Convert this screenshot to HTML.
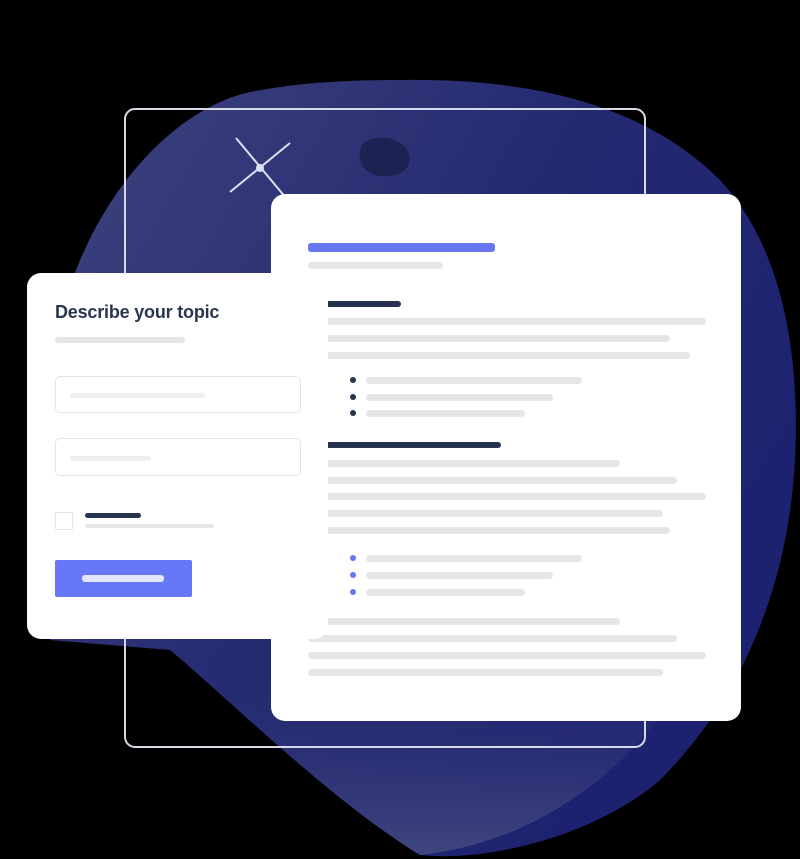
<!DOCTYPE html><html><head><style>
body{margin:0;background:#000;width:800px;height:859px;overflow:hidden;position:relative;font-family:"Liberation Sans",sans-serif}
.a{position:absolute}
.g{position:absolute;background:#e5e6e8;border-radius:4px;height:7px}
.d{position:absolute;background:#26344f;border-radius:3px;height:6px}
.b{position:absolute;width:6px;height:6px;border-radius:50%;background:#26344f}
.bb{background:#6677f0}
</style></head><body>
<svg class="a" style="left:0;top:0" width="800" height="859">
<defs><linearGradient id="gr" x1="0" y1="0" x2="1" y2="0.6"><stop offset="0" stop-color="#3e437f"/><stop offset=".55" stop-color="#242a70"/><stop offset="1" stop-color="#1c2170"/></linearGradient>
<linearGradient id="gb" x1="0" y1="0" x2="0" y2="1"><stop offset="0" stop-color="#262c72" stop-opacity="0"/><stop offset="1" stop-color="#40467f"/></linearGradient></defs>
<path d="M400 80 C520 78 640 100 720 180 C785 250 800 360 795 460 C788 590 740 700 660 780 C590 840 480 862 420 855 C330 800 230 700 170 650 L50 640 C42 540 44 400 60 320 C90 200 170 110 250 92 C300 82 350 80 400 80Z" fill="url(#gr)"/>
<path d="M170 650 L700 650 C660 740 560 840 420 855 C330 800 230 700 170 650Z" fill="url(#gb)"/>
<rect x="125" y="109" width="520" height="638" rx="10" fill="none" stroke="#d8d9e6" stroke-width="2"/>
<path d="M236 138 L286 198 M230 192 L290 143" stroke="#dfe0ef" stroke-width="2"/>
<circle cx="260" cy="168" r="4" fill="#dfe0ef"/>
<path d="M368 140 C385 134 406 140 409 155 C412 170 398 178 380 176 C362 173 358 160 360 150 C361 145 364 142 368 140Z" fill="#1d2252"/>
</svg>
<div class="a" style="left:271px;top:194px;width:470px;height:527px;background:#fff;border-radius:14px"></div>
<div class="a" style="left:308px;top:243px;width:187px;height:9px;background:#6677f0;border-radius:3px"></div>
<div class="g" style="left:308px;top:262px;width:135px"></div>
<div class="d" style="left:308px;top:301px;width:93px"></div>
<div class="g" style="left:308px;top:318px;width:398px"></div>
<div class="g" style="left:308px;top:335px;width:362px"></div>
<div class="g" style="left:308px;top:352px;width:382px"></div>
<div class="b" style="left:350px;top:377px"></div><div class="g" style="left:366px;top:377px;width:216px"></div>
<div class="b" style="left:350px;top:394px"></div><div class="g" style="left:366px;top:394px;width:187px"></div>
<div class="b" style="left:350px;top:410px"></div><div class="g" style="left:366px;top:410px;width:159px"></div>
<div class="d" style="left:308px;top:442px;width:193px"></div>
<div class="g" style="left:308px;top:460px;width:312px"></div>
<div class="g" style="left:308px;top:477px;width:369px"></div>
<div class="g" style="left:308px;top:493px;width:398px"></div>
<div class="g" style="left:308px;top:510px;width:355px"></div>
<div class="g" style="left:308px;top:527px;width:362px"></div>
<div class="b bb" style="left:350px;top:555px"></div><div class="g" style="left:366px;top:555px;width:216px"></div>
<div class="b bb" style="left:350px;top:572px"></div><div class="g" style="left:366px;top:572px;width:187px"></div>
<div class="b bb" style="left:350px;top:589px"></div><div class="g" style="left:366px;top:589px;width:159px"></div>
<div class="g" style="left:308px;top:618px;width:312px"></div>
<div class="g" style="left:308px;top:635px;width:369px"></div>
<div class="g" style="left:308px;top:652px;width:398px"></div>
<div class="g" style="left:308px;top:669px;width:355px"></div>
<div class="a" style="left:27px;top:273px;width:301px;height:366px;background:#fff;border-radius:14px"></div>
<div class="a" style="left:55px;top:302px;font-size:18px;font-weight:bold;color:#2a3550;letter-spacing:-0.2px">Describe your topic</div>
<div class="g" style="left:55px;top:337px;width:130px;height:6px"></div>
<div class="a" style="left:55px;top:376px;width:244px;height:35px;border:1px solid #e3e4e6;border-radius:5px"></div>
<div class="g" style="left:70px;top:393px;width:135px;height:5px;background:#eeeff0"></div>
<div class="a" style="left:55px;top:438px;width:244px;height:36px;border:1px solid #e3e4e6;border-radius:5px"></div>
<div class="g" style="left:70px;top:456px;width:81px;height:5px;background:#eeeff0"></div>
<div class="a" style="left:55px;top:512px;width:16px;height:16px;border:1px solid #e3e4e6;border-radius:2px"></div>
<div class="d" style="left:85px;top:513px;width:56px;height:5px"></div>
<div class="g" style="left:85px;top:524px;width:129px;height:4px"></div>
<div class="a" style="left:55px;top:560px;width:137px;height:37px;background:#6677f8;border-radius:2px"></div>
<div class="a" style="left:82px;top:575px;width:82px;height:7px;background:#e3e6ff;border-radius:3px"></div>
</body></html>
